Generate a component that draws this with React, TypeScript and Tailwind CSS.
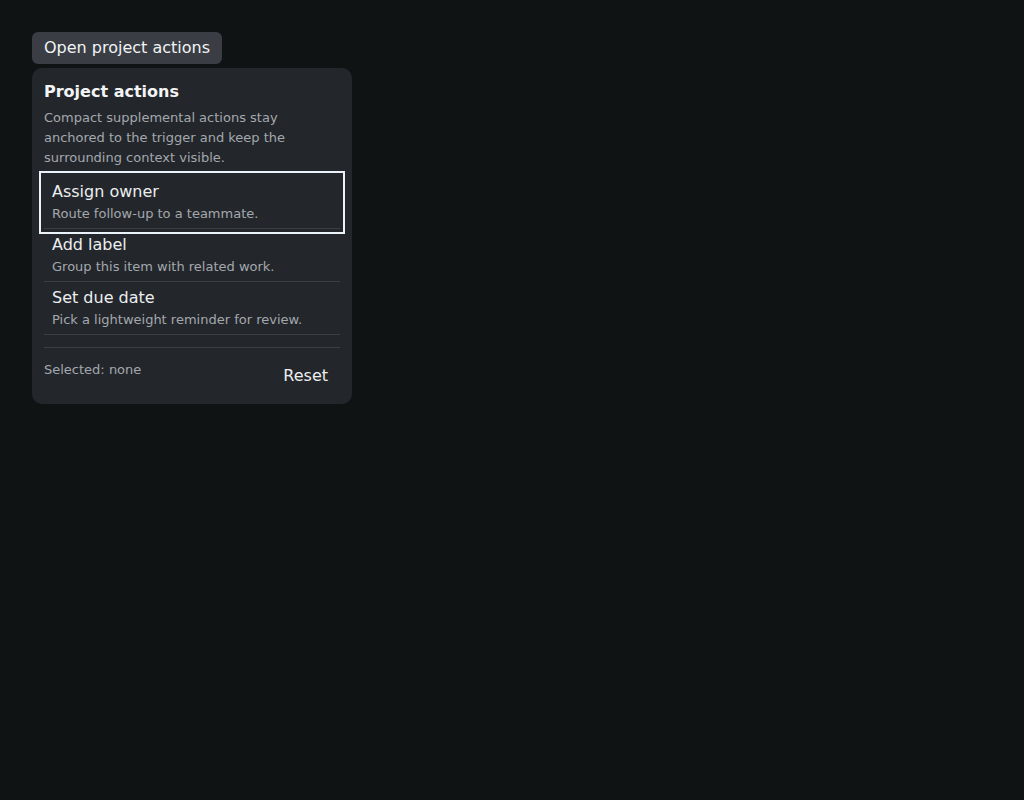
import React, { useState } from "react";

type Action = { id: string; label: string; hint: string };

const actions: Action[] = [
  { id: "owner", label: "Assign owner", hint: "Route follow-up to a teammate." },
  { id: "label", label: "Add label", hint: "Group this item with related work." },
  { id: "due", label: "Set due date", hint: "Pick a lightweight reminder for review." },
];

export default function App() {
  const [selected, setSelected] = useState<string | null>(null);
  const current = actions.find((a) => a.id === selected);

  return (
    <div
      className="min-h-screen bg-[#101314] p-8 text-[#eceef0]"
      style={{ fontFamily: '"DejaVu Sans", sans-serif' }}
    >
      <button className="rounded-md bg-[#3a3e44] px-3 py-1 text-base leading-6 text-[#f1f3f5]">
        Open project actions
      </button>

      <div className="mt-1 w-[320px] rounded-[10px] bg-[#23272b] p-3">
        <h2 className="text-base font-bold leading-6 text-[#f3f4f6]">Project actions</h2>
        <p className="mt-1 text-[13px] leading-5 text-[#a3a8ae]">
          Compact supplemental actions stay anchored to the trigger and keep the surrounding context
          visible.
        </p>

        <ul className="mt-2 flex flex-col">
          {actions.map((a, i) => (
            <li key={a.id}>
              <button
                onClick={() => setSelected(a.id)}
                className={
                  "block w-full border-b border-[#3a3e43] px-2 pt-1.5 pb-1 text-left " +
                  (i === 0 ? "outline-2 outline-offset-[3px] outline-[#eaf2fa]" : "")
                }
              >
                <span className="block text-base leading-5 text-[#eceef0]">{a.label}</span>
                <span className="mt-0.5 block text-[13px] leading-5 text-[#a3a8ae]">{a.hint}</span>
              </button>
            </li>
          ))}
        </ul>

        <div className="mt-3 flex items-start justify-between border-t border-[#3a3e43] pt-3">
          <span className="text-[13px] leading-5 text-[#a3a8ae]">
            Selected: {current ? current.label : "none"}
          </span>
          <button
            onClick={() => setSelected(null)}
            className="h-8 px-3 text-base leading-6 text-[#eceef0]"
          >
            Reset
          </button>
        </div>
      </div>
    </div>
  );
}
